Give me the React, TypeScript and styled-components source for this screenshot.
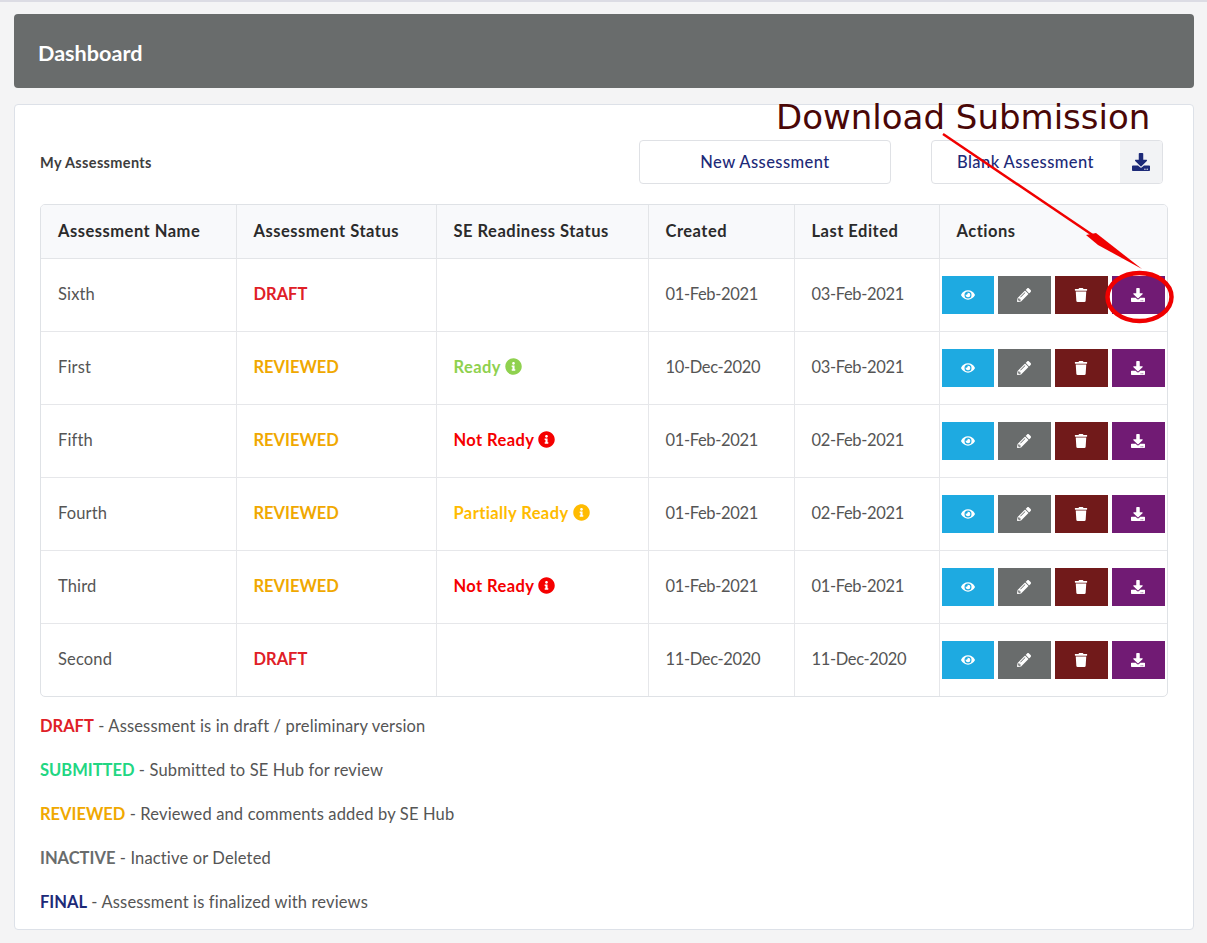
import React from 'react';
import styled, { createGlobalStyle } from 'styled-components';
import { FaDownload, FaEye, FaInfoCircle, FaPencilAlt, FaTrash } from 'react-icons/fa';

const GlobalStyle = createGlobalStyle`
  html, body {
    margin: 0;
    padding: 0;
    background: #f4f4f5;
    font-family: Lato, "Open Sans", Arial, sans-serif;
    color: #4a4a4a;
  }
  * { box-sizing: border-box; }
`;

const colors = {
  draft: '#df2027',
  submitted: '#22d682',
  reviewed: '#f0a800',
  inactive: '#696c6c',
  final: '#1d2a78',
};

const Page = styled.div`
  position: relative;
  width: 1207px;
  height: 943px;
  overflow: hidden;
  border-top: 2px solid #dcdce4;
  padding: 12px 13px 0 14px;
`;

const Header = styled.header`
  height: 74px;
  background: #696c6c;
  border-radius: 4px;
  display: flex;
  align-items: center;
  padding: 3px 0 0 24px;
  color: #fff;
  font-size: 21.6px;
  font-weight: 700;
`;

const Card = styled.section`
  margin-top: 16px;
  height: 826px;
  background: #fff;
  border: 1px solid #dde1e8;
  border-radius: 4px;
  padding: 35px 25px 0;
`;

const TopRow = styled.div`
  display: flex;
  align-items: center;
  height: 44px;
`;

const Subtitle = styled.h4`
  margin: 0;
  flex: 1;
  font-size: 14.5px;
  font-weight: 700;
  letter-spacing: 0.35px;
  color: #3d3d3d;
`;

const OutlineButton = styled.button`
  height: 44px;
  width: 252px;
  background: #fff;
  border: 1px solid #dfe1e5;
  border-radius: 4px;
  font: inherit;
  font-size: 16.5px;
  font-weight: 500;
  letter-spacing: 0.42px;
  color: #1d2a78;
`;

const SplitButton = styled.div`
  display: flex;
  width: 232px;
  height: 44px;
  margin: 0 5px 0 40px;
  background: #fff;
  border: 1px solid #dfe1e5;
  border-radius: 4px;
  overflow: hidden;
`;

const SplitLabel = styled.span`
  flex: 1;
  display: flex;
  align-items: center;
  padding-left: 25px;
  font-size: 16.5px;
  font-weight: 500;
  letter-spacing: 0.42px;
  color: #1d2a78;
`;

const SplitIcon = styled.span`
  width: 42px;
  display: flex;
  align-items: center;
  justify-content: center;
  background: #f2f3f5;
  color: #1d2a78;
  font-size: 18px;
`;

const TableWrap = styled.div`
  margin-top: 20px;
  width: 1128px;
  border: 1px solid #dfe2e6;
  border-radius: 5px;
  overflow: hidden;
`;

const Table = styled.table`
  width: 100%;
  table-layout: fixed;
  border-collapse: collapse;
`;

const Th = styled.th`
  height: 53px;
  padding: 0 16px 0 17px;
  background: #f8f9fb;
  border-bottom: 1px solid #e3e5e8;
  border-right: 1px solid #e3e5e8;
  text-align: left;
  font-size: 16.5px;
  font-weight: 700;
  letter-spacing: 0.5px;
  color: #2b2b2b;
  white-space: nowrap;
  &:last-child { border-right: 0; }
`;

const Td = styled.td`
  height: 73px;
  padding: 0 16px 2px 17px;
  border-bottom: 1px solid #e6e7ea;
  border-right: 1px solid #e6e7ea;
  font-size: 16.5px;
  letter-spacing: 0.15px;
  color: #555;
  white-space: nowrap;
  tr:last-child & { border-bottom: 0; }
  &:last-child { border-right: 0; padding: 0 0 0 2px; }
`;

const DateCell = styled(Td)`
  letter-spacing: -0.35px;
`;

const Status = styled.strong<{ $color: string }>`
  color: ${({ $color }) => $color};
  font-weight: 700;
  font-size: 16.5px;
  letter-spacing: 0;
`;

const Readiness = styled.span<{ $color: string }>`
  display: inline-flex;
  align-items: center;
  gap: 4px;
  color: ${({ $color }) => $color};
  font-weight: 700;
  letter-spacing: 0.4px;
  svg { font-size: 17px; }
`;

const Actions = styled.div`
  display: flex;
  gap: 4px;
`;

const ActionButton = styled.button<{ $bg: string; $w: number }>`
  width: ${({ $w }) => $w}px;
  height: 38px;
  padding: 0;
  border: 0;
  display: flex;
  align-items: center;
  justify-content: center;
  background: ${({ $bg }) => $bg};
  color: #fff;
  font-size: 14px;
`;

const Legend = styled.div`
  margin-top: 19px;
  display: flex;
  flex-direction: column;
  gap: 24px;
`;

const LegendLine = styled.div`
  height: 20px;
  line-height: 20px;
  font-size: 16.5px;
  letter-spacing: 0.15px;
  color: #555;
`;

const Overlay = styled.svg`
  position: absolute;
  left: 0;
  top: 0;
  pointer-events: none;
`;

const Callout = styled.span`
  position: absolute;
  left: 776px;
  top: 95px;
  font-family: "DejaVu Sans", sans-serif;
  font-size: 34px;
  line-height: 40px;
  color: #4a0707;
  white-space: nowrap;
`;

const widths = [195, 200, 212, 146, 145, 228];
const heads = ['Assessment Name', 'Assessment Status', 'SE Readiness Status', 'Created', 'Last Edited', 'Actions'];

type Ready = 'ready' | 'not' | 'partial' | null;

const rows: { name: string; status: 'DRAFT' | 'REVIEWED'; ready: Ready; created: string; edited: string }[] = [
  { name: 'Sixth', status: 'DRAFT', ready: null, created: '01-Feb-2021', edited: '03-Feb-2021' },
  { name: 'First', status: 'REVIEWED', ready: 'ready', created: '10-Dec-2020', edited: '03-Feb-2021' },
  { name: 'Fifth', status: 'REVIEWED', ready: 'not', created: '01-Feb-2021', edited: '02-Feb-2021' },
  { name: 'Fourth', status: 'REVIEWED', ready: 'partial', created: '01-Feb-2021', edited: '02-Feb-2021' },
  { name: 'Third', status: 'REVIEWED', ready: 'not', created: '01-Feb-2021', edited: '01-Feb-2021' },
  { name: 'Second', status: 'DRAFT', ready: null, created: '11-Dec-2020', edited: '11-Dec-2020' },
];

const readyInfo = {
  ready: { label: 'Ready', color: '#8fd14f' },
  not: { label: 'Not Ready', color: '#f50000' },
  partial: { label: 'Partially Ready', color: '#ffbb00' },
};

const legend = [
  { key: 'DRAFT', color: colors.draft, text: 'Assessment is in draft / preliminary version' },
  { key: 'SUBMITTED', color: colors.submitted, text: 'Submitted to SE Hub for review' },
  { key: 'REVIEWED', color: colors.reviewed, text: 'Reviewed and comments added by SE Hub' },
  { key: 'INACTIVE', color: colors.inactive, text: 'Inactive or Deleted' },
  { key: 'FINAL', color: colors.final, text: 'Assessment is finalized with reviews' },
];

export default function App() {
  return (
    <Page>
      <GlobalStyle />
      <Header>Dashboard</Header>
      <Card>
        <TopRow>
          <Subtitle>My Assessments</Subtitle>
          <OutlineButton>New Assessment</OutlineButton>
          <SplitButton>
            <SplitLabel>Blank Assessment</SplitLabel>
            <SplitIcon><FaDownload /></SplitIcon>
          </SplitButton>
        </TopRow>
        <TableWrap>
          <Table>
            <colgroup>
              {widths.map((w, i) => <col key={i} width={w} />)}
            </colgroup>
            <thead>
              <tr>{heads.map((h) => <Th key={h}>{h}</Th>)}</tr>
            </thead>
            <tbody>
              {rows.map((r) => (
                <tr key={r.name}>
                  <Td>{r.name}</Td>
                  <Td>
                    <Status $color={r.status === 'DRAFT' ? colors.draft : colors.reviewed}>{r.status}</Status>
                  </Td>
                  <Td>
                    {r.ready && (
                      <Readiness $color={readyInfo[r.ready].color}>
                        {readyInfo[r.ready].label} <FaInfoCircle />
                      </Readiness>
                    )}
                  </Td>
                  <DateCell>{r.created}</DateCell>
                  <DateCell>{r.edited}</DateCell>
                  <Td>
                    <Actions>
                      <ActionButton $bg="#1eaae1" $w={52}><FaEye /></ActionButton>
                      <ActionButton $bg="#696c6c" $w={53}><FaPencilAlt /></ActionButton>
                      <ActionButton $bg="#711a1a" $w={53}><FaTrash /></ActionButton>
                      <ActionButton $bg="#711b74" $w={53}><FaDownload /></ActionButton>
                    </Actions>
                  </Td>
                </tr>
              ))}
            </tbody>
          </Table>
        </TableWrap>
        <Legend>
          {legend.map((l) => (
            <LegendLine key={l.key}>
              <Status $color={l.color}>{l.key}</Status> - {l.text}
            </LegendLine>
          ))}
        </Legend>
      </Card>
      <Callout>Download Submission</Callout>
      <Overlay width="1207" height="943" viewBox="0 0 1207 943">
        <line x1="943" y1="132" x2="1094" y2="234" stroke="#f00000" strokeWidth="2.5" />
        <path d="M1086 233 L1096 231 L1142 267 L1098 243 Z" fill="#f00000" />
        <ellipse cx="1139.5" cy="295" rx="32" ry="24" fill="none" stroke="#f00000" strokeWidth="4.5" />
      </Overlay>
    </Page>
  );
}
